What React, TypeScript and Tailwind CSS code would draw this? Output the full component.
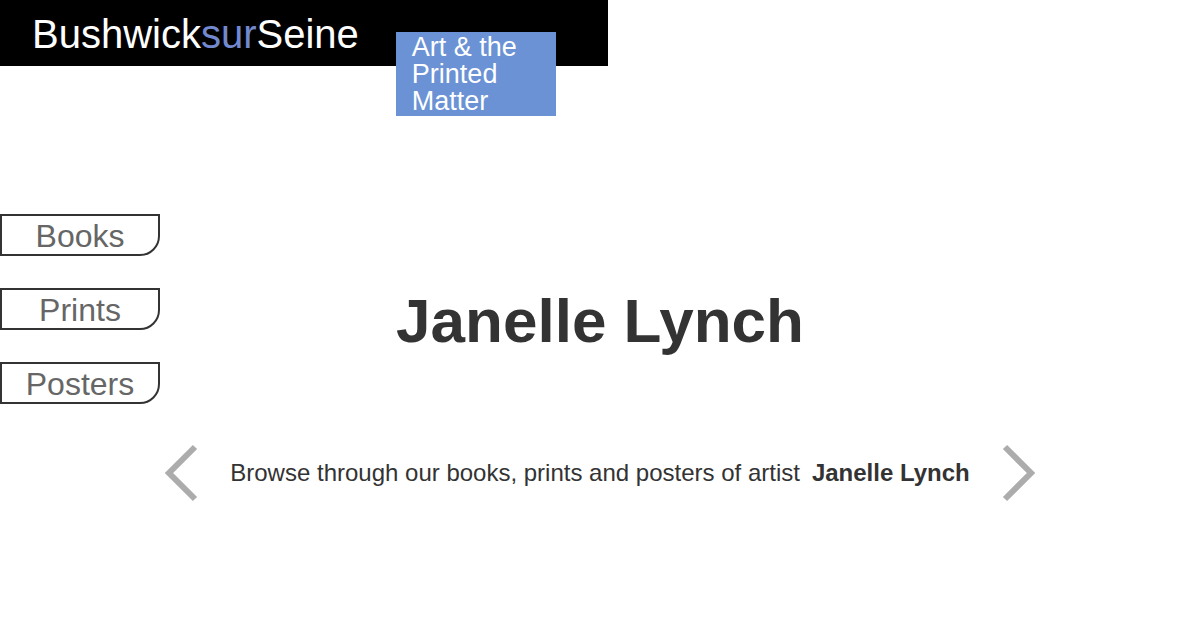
const categories = ["Books", "Prints", "Posters"];

function Chevron({ points }: { points: string }) {
  return (
    <svg width="34" height="58" viewBox="0 0 34 58" fill="none" aria-hidden="true">
      <polyline points={points} stroke="#acacac" strokeWidth="6" />
    </svg>
  );
}

export default function App() {
  return (
    <div className="min-h-screen bg-white font-['Liberation_Sans',Arial,sans-serif] text-[#333333]">
      <header className="flex h-[66px] w-fit items-start bg-black pr-[52px] pl-8 text-white">
        <a href="#home" className="mr-[37px] pt-3 text-[40px] leading-[44px]">
          Bushwick<span className="text-[#7389cf]">sur</span>Seine
        </a>
        <p className="mt-8 w-40 bg-[#6a92d4] px-4 pt-0.5 text-[27px] leading-[27px] pb-px">
          Art &amp; the Printed Matter
        </p>
      </header>

      <div className="grid grid-cols-[160px_1fr_160px] pt-[148px]">
        <nav aria-label="Categories" className="flex flex-col gap-8">
          {categories.map((name) => (
            <a
              key={name}
              href={`#${name.toLowerCase()}`}
              className="flex h-[42px] items-center justify-center rounded-br-[20px] border-2 border-[#333333] pt-0.5 text-[32px] leading-9 text-[#666666]"
            >
              {name}
            </a>
          ))}
        </nav>

        <main className="flex flex-col">
          <h1 className="pt-[71px] text-center text-[62px] leading-[72px] font-bold">
            Janelle Lynch
          </h1>
          <section className="mt-[87px] flex items-center justify-between px-1">
            <button type="button" aria-label="Previous">
              <Chevron points="31,3 5,29 31,55" />
            </button>
            <p className="text-2xl leading-7">
              Browse through our books, prints and posters of artist
              <strong className="ml-3">Janelle Lynch</strong>
            </p>
            <button type="button" aria-label="Next">
              <Chevron points="3,3 29,29 3,55" />
            </button>
          </section>
        </main>
      </div>
    </div>
  );
}
